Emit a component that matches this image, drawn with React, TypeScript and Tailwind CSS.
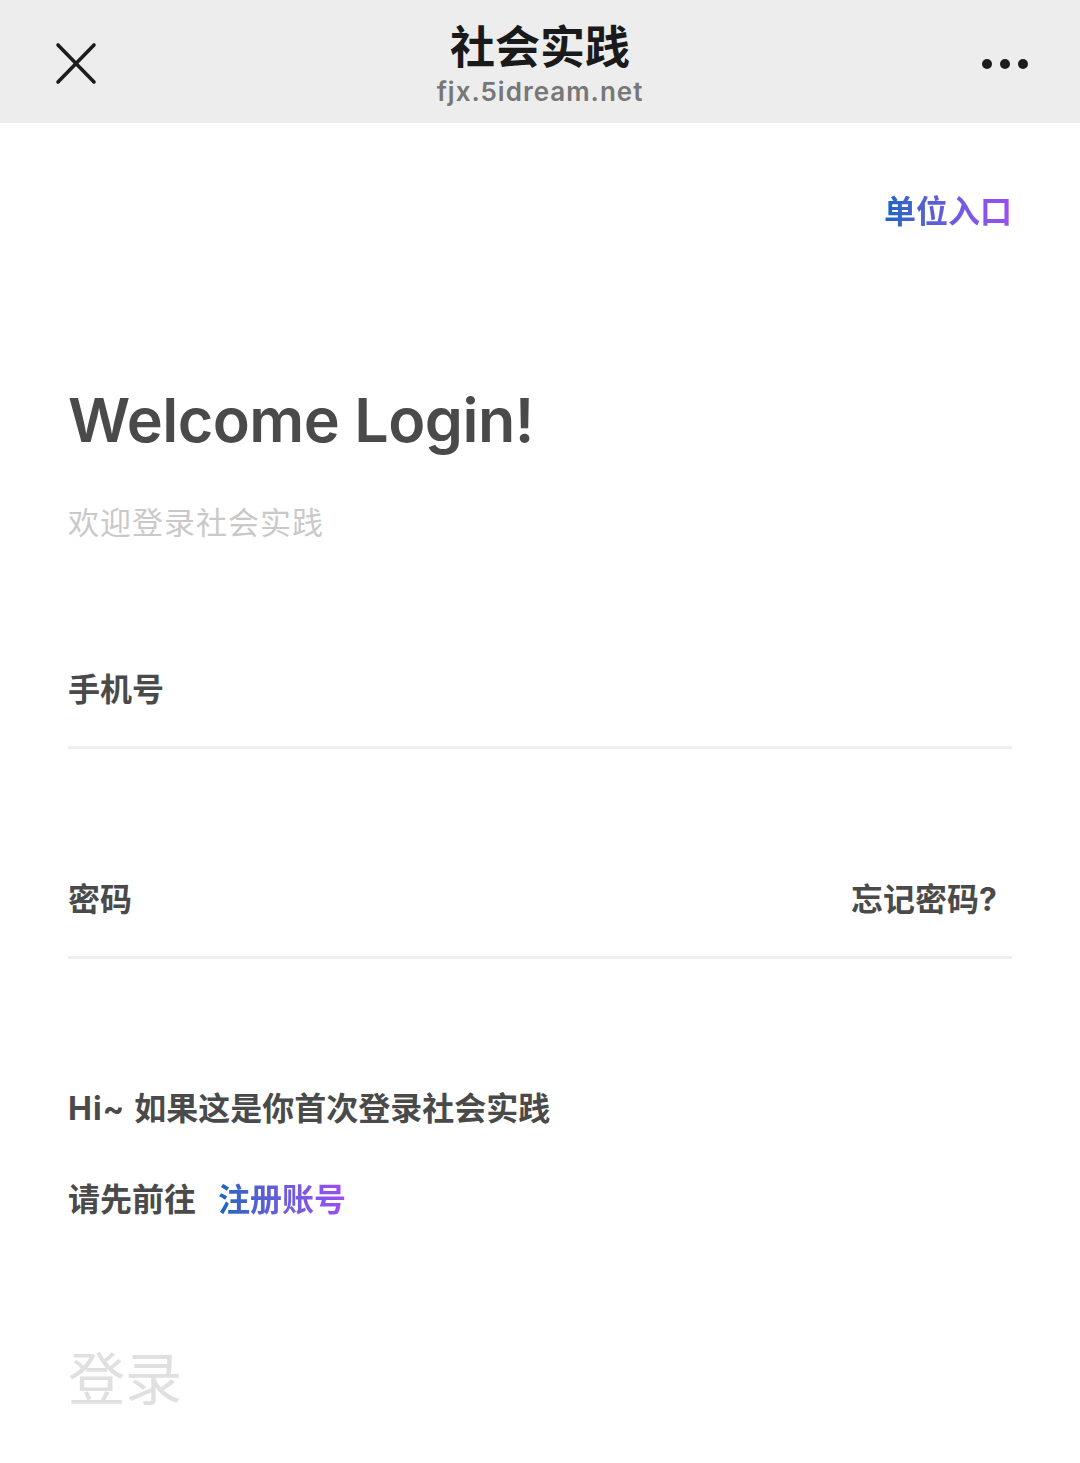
import React from 'react';

const cjk = "font-['Inter','Noto_Sans_CJK_SC',sans-serif]";

const Header: React.FC = () => (
  <div className="relative h-[123px] bg-[#ededed]">
    <button className="absolute left-[55px] top-[42px] h-[43px] w-[42px]">
      <svg viewBox="0 0 42 43" className="h-full w-full" fill="none" stroke="#1c1c1c" strokeWidth="3.6" strokeLinecap="round">
        <path d="M3 3 L39 40" />
        <path d="M39 3 L3 40" />
      </svg>
    </button>
    <div className="flex h-full flex-col items-center">
      <div className={`mt-[20px] h-[56px] text-[45px] leading-[56px] font-bold text-[#1a1a1a] ${cjk}`}>社会实践</div>
      <div className="h-[32px] text-[26px] leading-[32px] font-semibold tracking-[1px] text-[#777777] font-['Inter',sans-serif]">fjx.5idream.net</div>
    </div>
    <div className="absolute right-[52px] top-[59px] flex gap-[8px]">
      <span className="h-[10px] w-[10px] rounded-full bg-[#1c1c1c]" />
      <span className="h-[10px] w-[10px] rounded-full bg-[#1c1c1c]" />
      <span className="h-[10px] w-[10px] rounded-full bg-[#1c1c1c]" />
    </div>
  </div>
);

const Field: React.FC<{ label: string; right?: string }> = ({ label, right }) => (
  <div className="flex h-[116px] items-center justify-between border-b-[3px] border-[#efefef]">
    <span className="text-[32px] font-bold text-[#4a4a4a]">{label}</span>
    {right && <span className="mr-[15px] text-[32px] font-bold text-[#4a4a4a]">{right}</span>}
  </div>
);

const App: React.FC = () => {
  return (
    <div className={`min-h-[1463px] bg-white ${cjk}`}>
      <Header />
      <div className="px-[68px]">
        <div className="mt-[59px] flex h-[60px] items-center justify-end">
          <span className="bg-linear-to-r from-[#1565c0] to-[#9b4cf7] bg-clip-text text-[32px] font-bold text-transparent">单位入口</span>
        </div>
        <h1 className="mt-[138px] h-[80px] text-[61px] leading-[80px] font-semibold tracking-[-0.5px] text-[#4a4a4a] font-['Inter',sans-serif]">Welcome Login!</h1>
        <p className="mt-[43px] h-[40px] text-[31px] leading-[40px] tracking-[1px] text-[#c9c9c9]">欢迎登录社会实践</p>
        <div className="mt-[90px]">
          <Field label="手机号" />
        </div>
        <div className="mt-[94px]">
          <Field label="密码" right="忘记密码?" />
        </div>
        <p className="mt-[130px] flex h-[40px] items-center text-[32px] leading-[40px] font-bold text-[#4a4a4a]">
          <span className="mr-[9px] tracking-[1px]">Hi~</span>
          <span>如果这是你首次登录社会实践</span>
        </p>
        <p className="mt-[51px] flex h-[40px] items-center text-[32px] leading-[40px] font-bold text-[#4a4a4a]">
          <span>请先前往</span>
          <span className="ml-[22px] bg-linear-to-r from-[#1565c0] to-[#9b4cf7] bg-clip-text text-transparent">注册账号</span>
        </p>
        <button className="mt-[125px] h-[70px] text-[57px] leading-[70px] text-[#e0e0e0]">登录</button>
      </div>
    </div>
  );
};

export default App;
